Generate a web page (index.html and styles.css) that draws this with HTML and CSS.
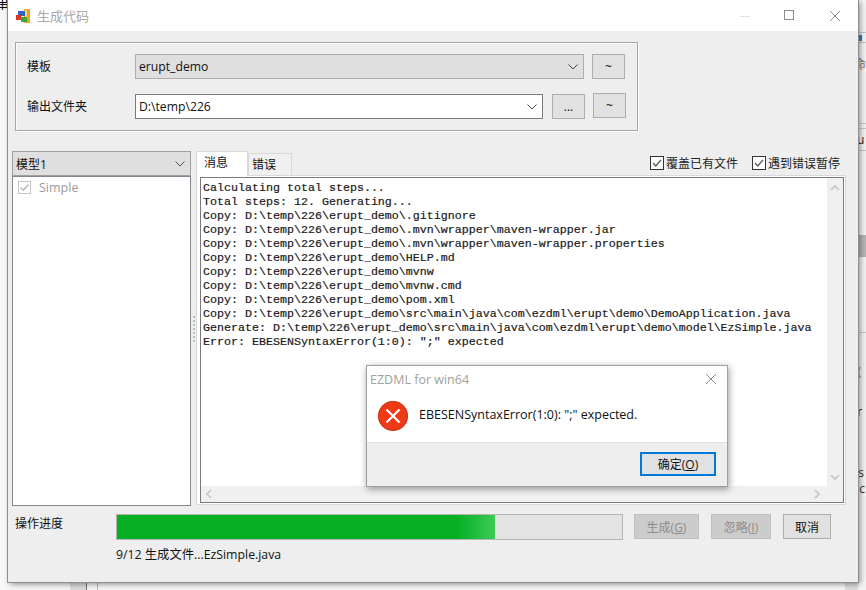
FILE: index.html
```html
<!DOCTYPE html>
<html lang="zh">
<head>
<meta charset="utf-8">
<title>生成代码</title>
<link rel="stylesheet" href="styles.css">
</head>
<body>
<div class="desk-left">串</div>
<div class="desk-top">Simple 错误错误错误</div>
<i class="desk-band db1"></i>
<i class="desk-band db2"></i>
<i class="desk-line dl1"></i>
<i class="desk-line dl2"></i>
<div class="desk-right">
  <i class="dr-rule r1"></i>
  <i class="dr-rule r2"></i>
  <i class="dr-rule r3"></i>
  <i class="dr-rule r4"></i>
  <i class="dr-rule r5"></i>
  <i class="dr-rule r6"></i>
  <i class="dr-blue"></i>
  <span class="dr-a">命</span>
  <span class="dr-b">ru</span>
  <i class="dr-thumb"></i>
  <span class="dr-c">C(</span>
  <span class="dr-d">_r</span>
  <span class="dr-e">.s</span>
  <span class="dr-f">nc</span>
</div>

<main class="window">
  <header class="titlebar">
    <svg class="app-icon" width="16" height="16" viewBox="0 0 16 16">
      <rect x="9" y="1" width="6" height="14" rx="1" fill="#e9a41f"/>
      <rect x="10" y="2" width="2" height="12" fill="#f7d27a"/>
      <rect x="3" y="3" width="7" height="5" fill="#2f63c9"/>
      <rect x="1" y="7" width="5" height="5" fill="#d9362b"/>
      <rect x="6" y="9" width="6" height="5" fill="#3ba53a"/>
    </svg>
    <span class="title">生成代码</span>
    <span class="caps">
      <svg width="12" height="12" viewBox="0 0 12 12"><path d="M1 6.500H11" stroke="#e2e2e2"/></svg>
      <svg width="12" height="12" viewBox="0 0 12 12"><rect x=".5" y=".5" width="9" height="9" fill="none" stroke="#8a8a8a"/></svg>
      <svg width="12" height="12" viewBox="0 0 12 12"><path d="M1 1L11 11M11 1L1 11" stroke="#8a8a8a"/></svg>
    </span>
  </header>

  <div class="body">
    <section class="group">
      <div class="row">
        <label class="lbl">模板</label>
        <div class="combo">erupt_demo
          <svg class="chev" width="10" height="6" viewBox="0 0 10 6"><path d="M.5 .5L5 5L9.500 .5" fill="none" stroke="#444"/></svg>
        </div>
        <button class="btn tilde">~</button>
      </div>
      <div class="row row2">
        <label class="lbl">输出文件夹</label>
        <div class="input">D:\temp\226
          <svg class="chev" width="10" height="6" viewBox="0 0 10 6"><path d="M.5 .5L5 5L9.500 .5" fill="none" stroke="#444"/></svg>
        </div>
        <button class="btn dots">...</button>
        <button class="btn tilde t2">~</button>
      </div>
    </section>

    <section class="mid">
      <aside class="left">
        <div class="model">模型1
          <svg class="chev" width="10" height="6" viewBox="0 0 10 6"><path d="M.5 .5L5 5L9.500 .5" fill="none" stroke="#555"/></svg>
        </div>
        <div class="list">
          <div class="item">
            <svg class="check" width="13" height="13" viewBox="0 0 13 13"><rect x=".5" y=".5" width="12" height="12" fill="#fff" stroke="#c4c4c4"/><path d="M2.500 6.500L5.200 9.200L10.500 3.500" fill="none" stroke="#b4b4b4" stroke-width="1.300"/></svg>
            <span>Simple</span>
          </div>
        </div>
      </aside>
      <div class="grip"><i></i><i></i><i></i><i></i><i></i><i></i><i></i></div>
      <div class="right">
        <div class="tabbar">
          <span class="tab on">消息</span>
          <span class="tab">错误</span>
          <span class="opts">
            <label class="opt"><svg width="14" height="14" viewBox="0 0 14 14"><rect x=".5" y=".5" width="13" height="13" fill="#fff" stroke="#333"/><path d="M3 7L5.800 10L11 3.800" fill="none" stroke="#555" stroke-width="1.300"/></svg>覆盖已有文件</label>
            <label class="opt"><svg width="14" height="14" viewBox="0 0 14 14"><rect x=".5" y=".5" width="13" height="13" fill="#fff" stroke="#333"/><path d="M3 7L5.800 10L11 3.800" fill="none" stroke="#555" stroke-width="1.300"/></svg>遇到错误暂停</label>
          </span>
        </div>
        <div class="panel">
          <div class="memo">
            <div class="memo-main">
<pre class="log">Calculating total steps...
Total steps: 12. Generating...
Copy: D:\temp\226\erupt_demo\.gitignore
Copy: D:\temp\226\erupt_demo\.mvn\wrapper\maven-wrapper.jar
Copy: D:\temp\226\erupt_demo\.mvn\wrapper\maven-wrapper.properties
Copy: D:\temp\226\erupt_demo\HELP.md
Copy: D:\temp\226\erupt_demo\mvnw
Copy: D:\temp\226\erupt_demo\mvnw.cmd
Copy: D:\temp\226\erupt_demo\pom.xml
Copy: D:\temp\226\erupt_demo\src\main\java\com\ezdml\erupt\demo\DemoApplication.java
Generate: D:\temp\226\erupt_demo\src\main\java\com\ezdml\erupt\demo\model\EzSimple.java
Error: EBESENSyntaxError(1:0): ";" expected</pre>
              <div class="vbar">
                <svg width="10" height="6" viewBox="0 0 10 6"><path d="M1 5L5 1L9 5" fill="none" stroke="#c4c4c4" stroke-width="1.600"/></svg>
                <svg width="10" height="6" viewBox="0 0 10 6"><path d="M1 1L5 5L9 1" fill="none" stroke="#c4c4c4" stroke-width="1.600"/></svg>
              </div>
            </div>
            <div class="hbar">
              <svg width="6" height="10" viewBox="0 0 6 10"><path d="M5 1L1 5L5 9" fill="none" stroke="#c4c4c4" stroke-width="1.600"/></svg>
              <svg width="6" height="10" viewBox="0 0 6 10"><path d="M1 1L5 5L1 9" fill="none" stroke="#c4c4c4" stroke-width="1.600"/></svg>
            </div>
          </div>
        </div>
      </div>
    </section>

    <section class="foot">
      <span class="foot-lbl">操作进度</span>
      <div class="foot-main">
        <div class="foot-row">
          <div class="progress"><div class="fill"></div></div>
          <button class="btn act dis w-gen">生成(<u>G</u>)</button>
          <button class="btn act dis w-ign">忽略(<u>I</u>)</button>
          <button class="btn act w-can">取消</button>
        </div>
        <div class="status">9/12 生成文件...EzSimple.java</div>
      </div>
    </section>
  </div>
</main>

<div class="dialog">
  <div class="dlg-title">
    <span>EZDML for win64</span>
    <svg width="12" height="12" viewBox="0 0 12 12"><path d="M1 1L11 11M11 1L1 11" stroke="#8a8a8a"/></svg>
  </div>
  <div class="dlg-body">
    <svg width="30" height="30" viewBox="0 0 30 30"><circle cx="15" cy="15" r="15" fill="#f03a17"/><circle cx="15" cy="15" r="14.500" fill="none" stroke="#c8381c"/><path d="M8.500 8.500L21.500 21.500M21.500 8.500L8.500 21.500" stroke="#fff" stroke-width="2.200"/></svg>
    <span class="dlg-msg">EBESENSyntaxError(1:0): ";" expected.</span>
  </div>
  <div class="dlg-foot">
    <button class="btn ok">确定(<u>O</u>)</button>
  </div>
</div>
</body>
</html>
```
FILE: styles.css
```css
* { box-sizing: border-box; }
html, body { margin: 0; padding: 0; }
body {
  width: 866px;
  height: 590px;
  overflow: hidden;
  position: relative;
  background: #f7f7f7;
  font-family: "Open Sans", "Noto Sans CJK SC", sans-serif;
  font-size: 12px;
  color: #111;
}

/* desktop fragments behind the window */
.desk-left {
  position: absolute; left: -4px; top: -5px;
  font-size: 13px; line-height: 16px; color: #111;
}
.desk-top {
  position: absolute; left: 135px; top: -12px;
  font-size: 13px; line-height: 16px; color: #d23a46;
  letter-spacing: 1px;
}
.desk-band { position: absolute; top: 582px; height: 8px; background: #dedede; }
.db1 { left: 70px; width: 16px; }
.db2 { left: 845px; width: 13px; }
.desk-line { position: absolute; top: 582px; width: 1px; height: 8px; }
.dl1 { left: 86px; background: #777; }
.dl2 { left: 97px; background: #bbb; }
.desk-right {
  position: absolute; left: 858px; top: 0; width: 8px; height: 590px;
  background: #f3f3f3; overflow: hidden;
}
.desk-right i, .desk-right span { position: absolute; }
.dr-rule { left: 0; width: 8px; height: 1px; background: #c8c8c8; }
.r1 { top: 32px; }
.r2 { top: 42px; }
.r3 { top: 123px; }
.r4 { top: 128px; }
.r5 { top: 150px; }
.r6 { top: 332px; }
.dr-blue { left: 0; top: 35px; width: 4px; height: 6px; background: #2a7ec8; }
.dr-thumb { left: 0; top: 235px; width: 8px; height: 22px; background: #b4b4b4; }
.desk-right span { left: -4px; font-size: 12px; line-height: 14px; white-space: nowrap; }
.dr-a { top: 58px; color: #7a6a55; }
.dr-b { top: 133px; left: -6px !important; color: #222; }
.dr-c { top: 365px; left: -8px !important; color: #6a7a8a; }
.dr-d { top: 405px; left: -6px !important; color: #222; }
.dr-e { top: 466px; left: -3px !important; color: #333; }
.dr-f { top: 482px; left: -6px !important; color: #333; }

/* main window */
.window {
  position: absolute; left: 8px; top: 0;
  width: 850px; height: 582px;
  display: flex; flex-direction: column;
  background: #eeeeee;
  box-shadow: 0 0 0 1px #8f8f8f, 2px 2px 6px rgba(0,0,0,.45);
}
.titlebar {
  height: 31px; flex: none;
  display: flex; align-items: center;
  background: #fff;
  padding: 0 0 0 7px;
}
.app-icon { margin-right: 6px; }
.title { color: #a8a8a8; font-size: 13px; }
.caps { margin-left: auto; display: flex; gap: 33px; padding-right: 17px; }
.body { flex: 1; display: flex; flex-direction: column; padding: 11px 0 0 4px; }

.group {
  margin-left: 3px;
  width: 623px; height: 89px;
  border: 1px solid #a6a6a6;
  box-shadow: inset 1px 1px 0 #fff, 1px 1px 0 #fff;
  padding: 11px 0 0 11px;
}
.row { display: flex; align-items: center; height: 25px; }
.row2 { margin-top: 15px; }
.lbl { width: 108px; flex: none; position: relative; top: -1px; }
.combo, .input {
  position: relative; height: 25px;
  display: flex; align-items: center;
  padding-left: 3px;
  font-size: 12.200px;
}
.combo { width: 449px; background: #dfdfdf; border: 1px solid #adadad; }
.input { width: 408px; background: #fff; border: 1px solid #7a7a7a; }
.chev { position: absolute; right: 5px; top: 9px; }
.btn {
  font: inherit; color: #111;
  background: #e1e1e1; border: 1px solid #adadad;
  padding: 0; height: 25px;
}
.tilde { width: 33px; margin-left: 8px; }
.dots { width: 33px; margin-left: 9px; }
.t2 { margin-left: 8px; position: relative; top: -1px; }

.mid { display: flex; height: 356px; margin-top: 20px; margin-left: 0; }
.left { width: 179px; flex: none; display: flex; flex-direction: column; }
.model {
  position: relative; height: 25px; flex: none;
  background: #dfdfdf; border: 1px solid #a0a0a0;
  display: flex; align-items: center; padding-left: 3px;
}
.list { flex: 1; background: #fff; border: 1px solid #828790; margin-bottom: 1px; }
.item { display: flex; align-items: center; gap: 8px; padding: 2px 0 0 5px; color: #9a9a9a; font-size: 12.500px; }
.grip { width: 5px; flex: none; display: flex; flex-direction: column; gap: 2px; padding: 165px 0 0 2px; }
.grip i { width: 2px; height: 2px; background: #c0c0c0; }
.right { width: 656px; flex: none; display: flex; flex-direction: column; }
.tabbar { position: relative; height: 24px; display: flex; align-items: flex-end; flex: none; }
.tab {
  width: 44px; height: 22px;
  display: block; line-height: 18px; padding: 2px 0 0 3px;
  border: 1px solid #d9d9d9; border-bottom: none; background: #f0f0f0;
}
.tab.on { width: 52px; height: 25px; line-height: 18px; background: #fff; position: relative; z-index: 1; margin-bottom: -1px; padding: 2px 0 0 7px; }
.opts { margin-left: auto; display: flex; gap: 14px; align-self: flex-start; padding: 3px 12px 0 0; }
.opt { display: flex; align-items: center; gap: 2px; color: #222; }
.panel { flex: 1; background: #fff; border: 1px solid #d9d9d9; margin-bottom: 2px; margin-right: 6px; padding: 1px 1px 1px 3px; }
.memo { height: 100%; background: #fff; border: 1px solid #7a7a7a; display: flex; flex-direction: column; }
.memo-main { flex: 1; display: flex; min-height: 0; }
.log {
  flex: 1; margin: 0; padding: 3px 0 0 2px;
  font-family: "Liberation Mono", monospace;
  font-size: 11.670px; line-height: 14px;
  color: #1a1a1a; white-space: pre; overflow: hidden;
  -webkit-text-stroke: .2px #1a1a1a;
}
.vbar { width: 16px; flex: none; background: #f0f0f0; display: flex; flex-direction: column; justify-content: space-between; align-items: center; padding: 7px 0 6px; }
.hbar { height: 16px; flex: none; background: #f0f0f0; display: flex; justify-content: space-between; align-items: center; padding: 0 23px 0 5px; }

.foot { display: flex; margin-top: 7px; padding-left: 3px; }
.foot-lbl { width: 101px; flex: none; }
.foot-main { flex: 1; }
.foot-row { display: flex; }
.progress { width: 507px; height: 26px; background: #e3e3e3; border: 1px solid #b4b4b4; }
.fill { width: 378px; height: 100%; background: linear-gradient(90deg, #06b025 0, #06b025 90%, #3ccb56 100%); }
.act { height: 25px; }
.dis { background: #cccccc; color: #8c8c8c; border-color: #bfbfbf; }
.w-gen { width: 65px; margin-left: 11px; }
.w-ign { width: 60px; margin-left: 12px; }
.w-can { width: 48px; margin-left: 12px; }
.status { margin-top: 6px; line-height: 18px; font-size: 12.300px; }

/* message box over the window */
.dialog {
  position: absolute; left: 366px; top: 365px;
  width: 362px; height: 122px;
  display: flex; flex-direction: column;
  background: #fff;
  border: 1px solid #a0a0a0;
  box-shadow: 1px 2px 7px rgba(0,0,0,.4);
}
.dlg-title { height: 26px; flex: none; display: flex; align-items: center; justify-content: space-between; padding: 0 10px 0 3px; color: #a0a0a0; font-size: 12.500px; }
.dlg-body { flex: 1; display: flex; align-items: center; gap: 11px; padding: 0 0 2px 11px; }
.dlg-msg { color: #111; font-size: 12.500px; position: relative; top: -2px; }
.dlg-foot { height: 44px; flex: none; display: flex; justify-content: flex-end; align-items: flex-start; background: #eeeeee; border-top: 1px solid #dfdfdf; padding: 9px 11px 0 0; }
.ok { width: 76px; height: 24px; border: 2px solid #0078d7; }
```
